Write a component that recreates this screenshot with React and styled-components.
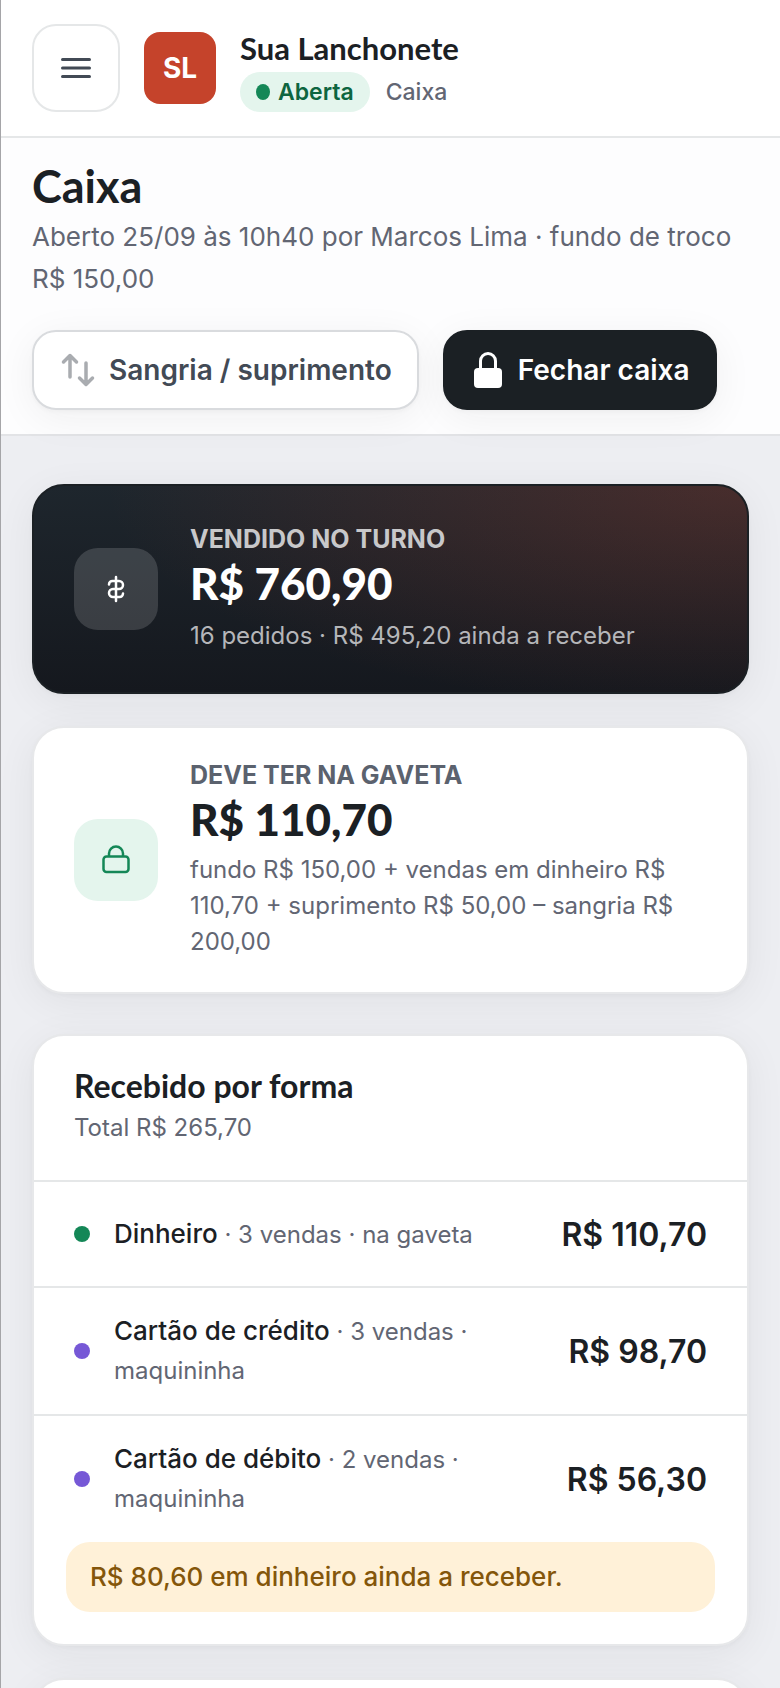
import styled, { createGlobalStyle, css } from "styled-components";

const METHODS = [
  { id: 1, name: "Dinheiro", info: "3 vendas · na gaveta", value: "R$ 110,70", color: "#148757" },
  { id: 2, name: "Cartão de crédito", info: "3 vendas · maquininha", value: "R$ 98,70", color: "#7658d6" },
  { id: 3, name: "Cartão de débito", info: "2 vendas · maquininha", value: "R$ 56,30", color: "#7658d6" },
];

const MenuIcon = () => (
  <svg width="32" height="32" viewBox="0 0 32 32" fill="none" stroke="#424a55" strokeWidth="3" strokeLinecap="round" aria-hidden="true">
    <path d="M2.5 7.5h27M2.5 16h27M2.5 24.5h27" />
  </svg>
);

const SwapIcon = () => (
  <svg width="34" height="34" viewBox="0 0 34 34" fill="none" stroke="#a9acb0" strokeWidth="3.5" strokeLinecap="round" strokeLinejoin="round" aria-hidden="true">
    <path d="M9 24V2.500M2.500 9L9 2.500 15.500 9M25 10v21.500M18.500 25l6.500 6.500 6.500-6.500" />
  </svg>
);

const LockSolidIcon = () => (
  <svg width="32" height="38" viewBox="0 0 32 38" fill="none" aria-hidden="true">
    <path d="M8.500 18V10a7.500 7.500 0 0 1 15 0v8" stroke="#fff" strokeWidth="3" />
    <rect x="2" y="17" width="28" height="20" rx="4" fill="#fff" />
  </svg>
);

const MoneyIcon = () => (
  <svg width="20" height="28" viewBox="0 0 20 28" fill="none" stroke="#fff" strokeWidth="2.5" strokeLinecap="round" strokeLinejoin="round" aria-hidden="true">
    <path d="M10 2v24M3 9.500c0-2 1.500-3.500 3.500-3.500H13a4 4 0 0 1 0 8H7a4 4 0 0 0 0 8h6.500c2 0 3.500-1.500 3.500-3.500" />
  </svg>
);

const LockIcon = () => (
  <svg width="30" height="30" viewBox="0 0 30 30" fill="none" stroke="#148757" strokeWidth="2.500" strokeLinejoin="round" aria-hidden="true">
    <rect x="2.500" y="11.500" width="25" height="15.500" rx="3" />
    <path d="M8 11.500V8.500a7 7 0 0 1 14 0V11.500" />
  </svg>
);

const App = () => (
  <>
    <GlobalStyle />
    <Page>
      <TopBar>
        <MenuButton aria-label="Abrir menu">
          <MenuIcon />
        </MenuButton>
        <Logo>SL</Logo>
        <div>
          <StoreName>Sua Lanchonete</StoreName>
          <StoreInfo>
            <Status>Aberta</Status>
            <span>Caixa</span>
          </StoreInfo>
        </div>
      </TopBar>

      <PageHeader>
        <Title>Caixa</Title>
        <Subtitle>
          Aberto 25/09 às 10h40 por Marcos Lima · fundo de troco R$&nbsp;150,00
        </Subtitle>
        <Actions>
          <ActionButton>
            <SwapIcon />
            Sangria / suprimento
          </ActionButton>
          <ActionButton $primary>
            <LockSolidIcon />
            Fechar caixa
          </ActionButton>
        </Actions>
      </PageHeader>

      <Content>
        <Summary>
          <SummaryCard $dark>
            <IconBox $dark>
              <MoneyIcon />
            </IconBox>
            <div>
              <SummaryLabel $dark>VENDIDO NO TURNO</SummaryLabel>
              <SummaryValue>R$ 760,90</SummaryValue>
              <SummaryNote $dark>16 pedidos · R$ 495,20 ainda a receber</SummaryNote>
            </div>
          </SummaryCard>

          <SummaryCard>
            <IconBox>
              <LockIcon />
            </IconBox>
            <div>
              <SummaryLabel>DEVE TER NA GAVETA</SummaryLabel>
              <SummaryValue>R$ 110,70</SummaryValue>
              <SummaryNote>
                fundo R$ 150,00 + vendas em dinheiro R$ 110,70 + suprimento R$
                50,00 – sangria R$ 200,00
              </SummaryNote>
            </div>
          </SummaryCard>
        </Summary>

        <Panel>
          <PanelHeader>
            <PanelTitle>Recebido por forma</PanelTitle>
            <PanelTotal>Total R$ 265,70</PanelTotal>
          </PanelHeader>
          <MethodList>
            {METHODS.map((method) => (
              <Method key={method.id}>
                <Dot $color={method.color} />
                <MethodText>
                  <strong>{method.name}</strong> · {method.info}
                </MethodText>
                <MethodValue>{method.value}</MethodValue>
              </Method>
            ))}
          </MethodList>
          <Notice>R$ 80,60 em dinheiro ainda a receber.</Notice>
        </Panel>

        <Panel />
      </Content>
    </Page>
  </>
);

export default App;

const GlobalStyle = createGlobalStyle`
  * {
    box-sizing: border-box;
  }

  body {
    margin: 0;
    background-color: #edeef2;
    font-family: Inter, sans-serif;
    color: #1b2024;
  }

  h1, h2, p, ul {
    margin: 0;
    padding: 0;
  }

  button {
    font-family: inherit;
    cursor: pointer;
  }

  svg {
    flex-shrink: 0;
  }
`;

const cardShadow = css`
  box-shadow: 0 2px 4px #1b202408, 0 8px 40px #1b20240f;
`;

const Page = styled.div`
  height: 100vh;
  overflow: hidden;
  border-left: 1px solid #a5a5a8;
`;

const TopBar = styled.header`
  display: flex;
  align-items: center;
  gap: 24px;

  padding: 24px 31px;

  background-color: white;
  border-bottom: 2px solid #e5e7e8;
`;

const MenuButton = styled.button`
  display: flex;
  justify-content: center;
  align-items: center;

  width: 88px;
  height: 88px;

  background-color: white;
  border: 2px solid #e5e7e8;
  border-radius: 24px;
`;

const Logo = styled.div`
  width: 72px;
  height: 72px;

  background-color: #c5432b;
  border-radius: 16px;

  font-size: 28px;
  font-weight: 700;
  line-height: 72px;
  text-align: center;
  color: white;
`;

const StoreName = styled.p`
  font-family: Lato, sans-serif;
  font-size: 31px;
  font-weight: 700;
  line-height: 48px;
`;

const StoreInfo = styled.div`
  display: flex;
  align-items: center;
  gap: 16px;

  font-size: 23px;
  font-weight: 500;
  line-height: 40px;
  color: #626673;
`;

const Status = styled.span`
  display: flex;
  align-items: center;
  gap: 8px;

  padding: 0 16px;

  background-color: #e4f5ed;
  border-radius: 20px;

  font-weight: 600;
  color: #0d6540;

  &::before {
    content: "";
    width: 14px;
    height: 16px;
    border-radius: 50%;
    background-color: #148757;
  }
`;

const PageHeader = styled.section`
  padding: 24px 31px;

  background-color: #fdfdfe;
  border-bottom: 2px solid #e2e3e6;
`;

const Title = styled.h1`
  font-family: Lato, sans-serif;
  font-size: 45px;
  font-weight: 700;
  line-height: 48px;
`;

const Subtitle = styled.p`
  margin: 6px 0 30px;

  font-size: 26px;
  line-height: 42px;
  color: #626673;
`;

const Actions = styled.div`
  display: flex;
  gap: 24px;
`;

const ActionButton = styled.button`
  display: flex;
  align-items: center;
  gap: 14px;

  height: 80px;
  padding: 0 25px 0 27px;

  background-color: white;
  border: 2px solid #d9dbde;
  border-radius: 24px;

  font-size: 28px;
  font-weight: 600;
  white-space: nowrap;
  color: #424a55;

  ${cardShadow}

  ${({ $primary }) =>
    $primary &&
    css`
      background-color: #1b2024;
      border-color: #1b2024;
      color: white;
    `}
`;

const Content = styled.main`
  padding: 48px 31px 0;
`;

const Summary = styled.div`
  display: flex;
  flex-direction: column;
  gap: 32px;

  margin-bottom: 40px;
`;

const SummaryCard = styled.section`
  display: flex;
  align-items: center;
  gap: 32px;

  padding: 32px 40px;

  background-color: white;
  border: 2px solid #e7e8ea;
  border-radius: 32px;

  ${cardShadow}

  ${({ $dark }) =>
    $dark &&
    css`
      padding: 38px 40px;
      background: radial-gradient(
          ellipse 90% 110% at 100% 0%,
          #c5432b40,
          transparent
        ),
        linear-gradient(#1e262d, #15181e);
      border-color: #1b2024;
      color: white;
    `}
`;

const IconBox = styled.div`
  display: flex;
  flex-shrink: 0;
  justify-content: center;
  align-items: center;

  width: 84px;
  height: 82px;

  background-color: ${({ $dark }) => ($dark ? "#ffffff26" : "#e4f5ed")};
  border-radius: 24px;
`;

const SummaryLabel = styled.p`
  font-size: 25px;
  font-weight: 700;
  line-height: 30px;
  color: ${({ $dark }) => ($dark ? "#c8c8ca" : "#5b626e")};
`;

const SummaryValue = styled.p`
  font-family: Lato, sans-serif;
  font-size: 44px;
  font-weight: 900;
  line-height: 58px;
`;

const SummaryNote = styled.p`
  padding-top: ${({ $dark }) => ($dark ? "6px" : "4px")};

  font-size: 24px;
  line-height: 36px;
  color: ${({ $dark }) => ($dark ? "#b5b6b9" : "#626673")};
`;

const Panel = styled.section`
  margin-bottom: 32px;
  min-height: 200px;

  background-color: white;
  border: 2px solid #e7e8ea;
  border-radius: 32px;

  ${cardShadow}
`;

const PanelHeader = styled.div`
  padding: 32px 40px;
`;

const PanelTitle = styled.h2`
  font-family: Lato, sans-serif;
  font-size: 32px;
  font-weight: 700;
  line-height: 36px;
`;

const PanelTotal = styled.p`
  padding-top: 4px;

  font-size: 24px;
  line-height: 40px;
  color: #626673;
`;

const MethodList = styled.ul`
  list-style-type: none;
`;

const Method = styled.li`
  display: flex;
  align-items: center;
  gap: 24px;

  min-height: 106px;
  padding: 24px 40px;

  border-top: 2px solid #e5e7e8;
`;

const Dot = styled.span`
  flex-shrink: 0;

  width: 16px;
  height: 16px;

  background-color: ${({ $color }) => $color};
  border-radius: 50%;
`;

const MethodText = styled.p`
  flex: 1 1 0;

  font-size: 24px;
  line-height: 39px;
  color: #626673;

  strong {
    font-size: 26px;
    font-weight: 500;
    line-height: 1;
    color: #1b2024;
  }
`;

const MethodValue = styled.span`
  font-size: 32px;
  font-weight: 600;
  white-space: nowrap;
`;

const Notice = styled.p`
  margin: 0 32px 32px;
  padding: 15px 24px;

  background-color: #fff1d8;
  border-radius: 24px;

  font-size: 26px;
  font-weight: 500;
  line-height: 40px;
  color: #84560a;
`;
